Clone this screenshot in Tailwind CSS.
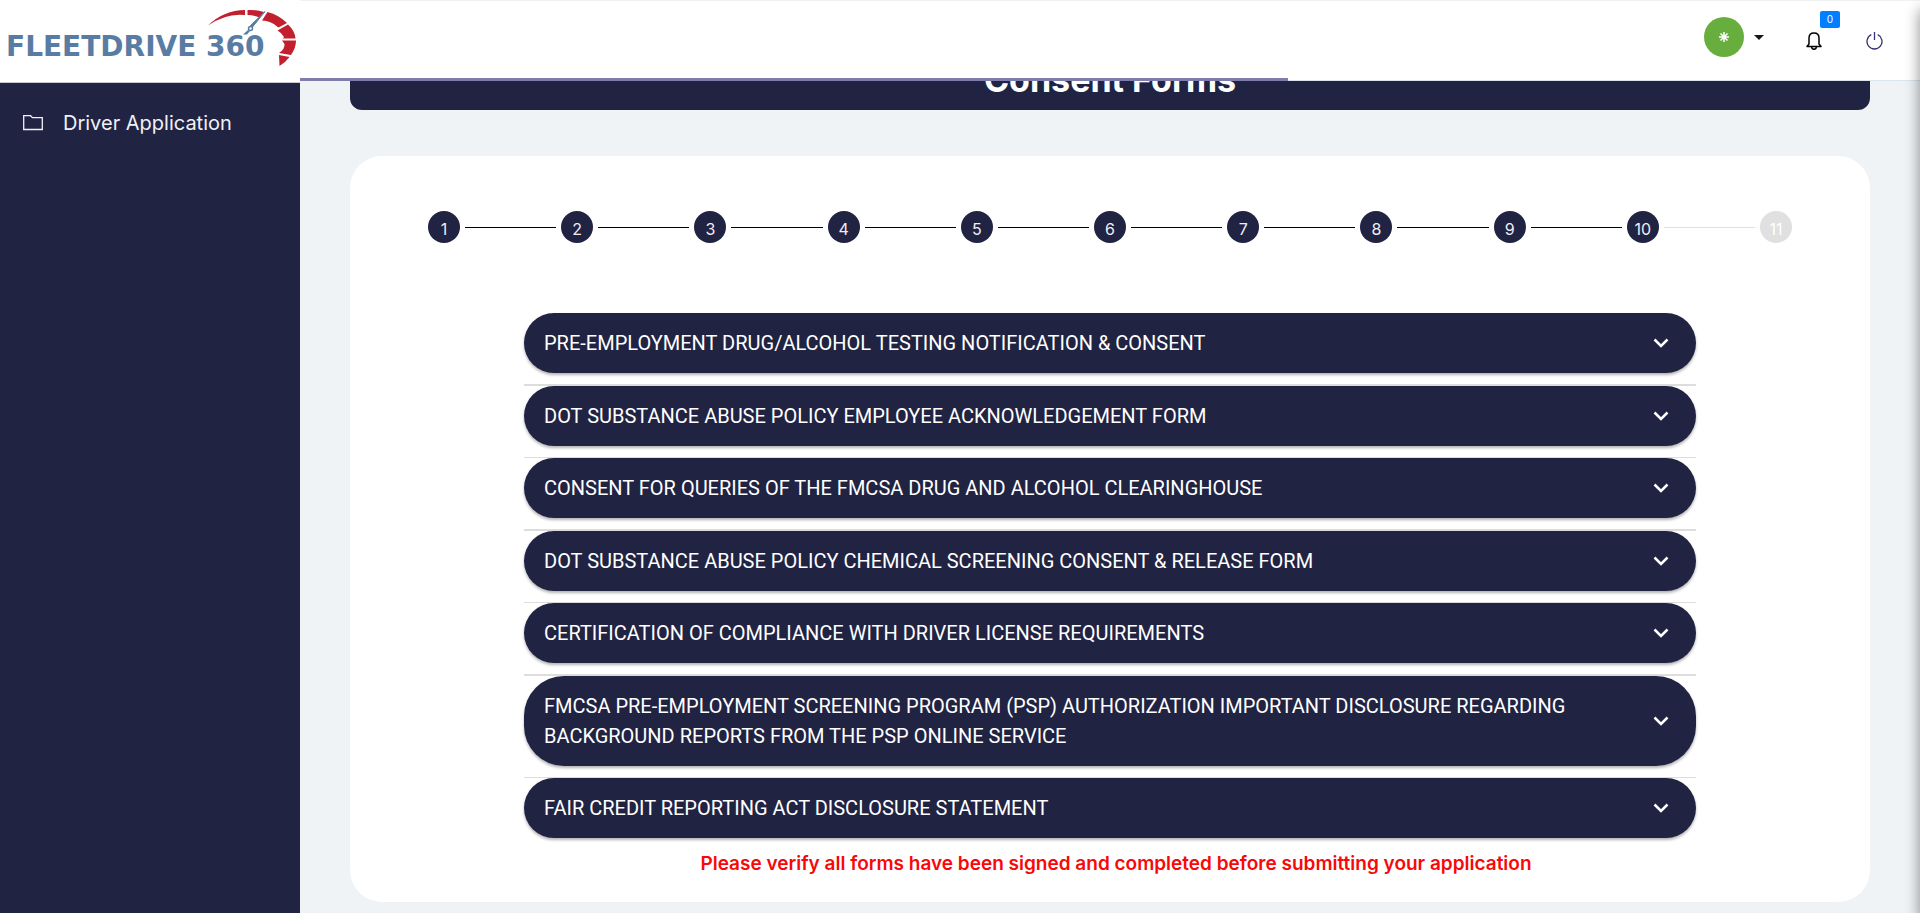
<!DOCTYPE html>
<html lang="en">
<head>
<meta charset="utf-8">
<title>FleetDrive 360 - Consent Forms</title>
<script src="https://cdn.jsdelivr.net/npm/@tailwindcss/browser@4"></script>
</head>
<body class="relative flex h-screen overflow-hidden bg-[#eff3f6] font-['Inter',sans-serif]">
<aside class="flex w-[300px] shrink-0 flex-col bg-[#212343]">
  <a href="#" aria-label="FleetDrive 360" class="relative flex h-[83px] items-center border-b border-[#c9c9cf] bg-white pt-3 pl-[6px] font-['DejaVu_Sans',sans-serif] text-[28px] font-bold whitespace-nowrap text-[#587ca3]">FLEETDRIVE 360
    <svg class="absolute top-[5px] left-[200px]" width="104" height="66" viewBox="0 0 104 66" fill="none">
      <path d="M8 20.500Q24 5 45 5V10Q26 8 8 20.500Z" fill="#c2202f"/>
      <path d="M47.500 5Q56 4.500 64 7L59.500 12.500Q53 10 47.500 10Z" fill="#c2202f"/>
      <path d="M67.500 7Q79 10 87 18L78.500 22.500L77 21.500Q71 16 62 15.500Z" fill="#c2202f"/>
      <path d="M88 19.500Q95 26 95.500 33.500H83L84 32Q82 28 77.500 25.500Z" fill="#c2202f"/>
      <path d="M96 35.500Q96 43 91 50L79 48Q85 44 84.500 39L82 35.500Z" fill="#c2202f"/>
      <path d="M89.500 52Q86 57 79.500 61L79 50Z" fill="#c2202f"/>
      <path d="M65 6.500L52.500 22L50.500 20.500Z" fill="#587ca3" stroke="#587ca3"/>
      <circle cx="50.500" cy="23.500" r="2" stroke="#587ca3" stroke-width="1.500"/>
      <path d="M48 25L43 29.500H47L50 26Z" fill="#587ca3"/>
    </svg>
  </a>
  <nav class="pt-6">
    <a href="#" class="flex items-center gap-5 px-[23px] text-xl leading-8 text-[#f1f1f6]">
      <svg width="20" height="16" viewBox="0 0 20 16" fill="none" stroke="currentColor" stroke-width="1.300"><path d="M.7 14.500V.7H7.500L9.500 2.700H19.300V14.500Z"/></svg>
      Driver Application
    </a>
  </nav>
</aside>
<div class="flex min-w-0 flex-1 flex-col">
  <header class="relative z-10 flex h-[81px] shrink-0 items-center justify-end border-t border-b border-t-[#eff3f6] border-b-[#dbe5ee] bg-white pr-[37px]">
    <button aria-label="Account" class="mr-[42px] flex items-center gap-[10px] pb-[7px]">
      <span class="flex size-10 items-center justify-center rounded-full bg-[#68ae3f] text-white">
        <svg width="10" height="10" viewBox="0 0 10 10" stroke="white" stroke-width="1.500"><path d="M5 0V10M0 5H10M1.500 1.500L8.500 8.500M8.500 1.500L1.500 8.500"/></svg>
      </span>
      <svg width="10" height="5" viewBox="0 0 10 5" fill="#14161f"><path d="M0 0H10L5 5Z"/></svg>
    </button>
    <button aria-label="Notifications" class="relative mr-11">
      <svg width="16" height="18" viewBox="0 0 16 18" fill="none" stroke="black" stroke-width="1.500"><path d="M3 12V6Q3 1 8 1T13 6V12L15 14.500H1Z" stroke-linejoin="round"/><path d="M5.500 15Q6 17.300 8 17.300T10.500 15"/></svg>
      <span class="absolute -top-[21px] left-[14px] flex h-[17px] w-5 items-center justify-center rounded-xs bg-[#0080ff] text-[10px] text-white">0</span>
    </button>
    <button aria-label="Log out">
      <svg width="17" height="18" viewBox="0 0 17 18" fill="none" stroke="#353377" stroke-width="1.300"><path d="M5.300 2.700A7.500 7.500 0 1 0 11.700 2.700M8.500 0V8"/></svg>
    </button>
    <div class="absolute -bottom-px left-0 h-[3px] w-[61%] bg-[#7f7dae]"></div>
  </header>
  <main class="flex-1 px-[50px]">
    <h1 class="-mt-8 flex h-[61px] items-end justify-center rounded-xl bg-[#212343] pb-3 text-[34px] leading-9 font-bold text-white">Consent Forms</h1>
    <section class="mt-[46px] rounded-[32px] bg-white px-[78px] pt-[55px] pb-6">
      <ol class="flex items-center gap-[5px] text-base text-[#eeeef4]">
        <li class="flex size-8 shrink-0 items-center justify-center rounded-full bg-[#212343] pt-1">1</li><li aria-hidden="true" class="h-px flex-1 bg-black"></li>
        <li class="flex size-8 shrink-0 items-center justify-center rounded-full bg-[#212343] pt-1">2</li><li aria-hidden="true" class="h-px flex-1 bg-black"></li>
        <li class="flex size-8 shrink-0 items-center justify-center rounded-full bg-[#212343] pt-1">3</li><li aria-hidden="true" class="h-px flex-1 bg-black"></li>
        <li class="flex size-8 shrink-0 items-center justify-center rounded-full bg-[#212343] pt-1">4</li><li aria-hidden="true" class="h-px flex-1 bg-black"></li>
        <li class="flex size-8 shrink-0 items-center justify-center rounded-full bg-[#212343] pt-1">5</li><li aria-hidden="true" class="h-px flex-1 bg-black"></li>
        <li class="flex size-8 shrink-0 items-center justify-center rounded-full bg-[#212343] pt-1">6</li><li aria-hidden="true" class="h-px flex-1 bg-black"></li>
        <li class="flex size-8 shrink-0 items-center justify-center rounded-full bg-[#212343] pt-1">7</li><li aria-hidden="true" class="h-px flex-1 bg-black"></li>
        <li class="flex size-8 shrink-0 items-center justify-center rounded-full bg-[#212343] pt-1">8</li><li aria-hidden="true" class="h-px flex-1 bg-black"></li>
        <li class="flex size-8 shrink-0 items-center justify-center rounded-full bg-[#212343] pt-1">9</li><li aria-hidden="true" class="h-px flex-1 bg-black"></li>
        <li class="flex size-8 shrink-0 items-center justify-center rounded-full bg-[#212343] pt-1">10</li><li aria-hidden="true" class="h-px flex-1 bg-[#e0e0e0]"></li>
        <li class="flex size-8 shrink-0 items-center justify-center rounded-full bg-[#e0e0e0] pt-1 text-white">11</li>
      </ol>
      <div class="mx-24 mt-[70px] flex flex-col font-['Roboto',sans-serif] text-xl leading-[30px] text-white">
        <button class="flex items-center justify-between rounded-[30px] bg-[#212343] py-[15px] pr-[27px] pl-5 text-left shadow-[0_2px_3px_rgba(0,0,0,0.3)]"><span>PRE-EMPLOYMENT DRUG/ALCOHOL TESTING NOTIFICATION &amp; CONSENT</span><svg class="shrink-0" width="16" height="10" viewBox="0 0 16 10" fill="none" stroke="white" stroke-width="2.500"><path d="M1.500 1.500L8 8L14.500 1.500"/></svg></button>
        <hr class="mt-[11px] border-t-2 border-[#dddddd]">
        <button class="flex items-center justify-between rounded-[30px] bg-[#212343] py-[15px] pr-[27px] pl-5 text-left shadow-[0_2px_3px_rgba(0,0,0,0.3)]"><span>DOT SUBSTANCE ABUSE POLICY EMPLOYEE ACKNOWLEDGEMENT FORM</span><svg class="shrink-0" width="16" height="10" viewBox="0 0 16 10" fill="none" stroke="white" stroke-width="2.500"><path d="M1.500 1.500L8 8L14.500 1.500"/></svg></button>
        <hr class="mt-[11px] border-t border-[#dddddd]">
        <button class="flex items-center justify-between rounded-[30px] bg-[#212343] py-[15px] pr-[27px] pl-5 text-left shadow-[0_2px_3px_rgba(0,0,0,0.3)]"><span>CONSENT FOR QUERIES OF THE FMCSA DRUG AND ALCOHOL CLEARINGHOUSE</span><svg class="shrink-0" width="16" height="10" viewBox="0 0 16 10" fill="none" stroke="white" stroke-width="2.500"><path d="M1.500 1.500L8 8L14.500 1.500"/></svg></button>
        <hr class="mt-[11px] border-t-2 border-[#dddddd]">
        <button class="flex items-center justify-between rounded-[30px] bg-[#212343] py-[15px] pr-[27px] pl-5 text-left shadow-[0_2px_3px_rgba(0,0,0,0.3)]"><span>DOT SUBSTANCE ABUSE POLICY CHEMICAL SCREENING CONSENT &amp; RELEASE FORM</span><svg class="shrink-0" width="16" height="10" viewBox="0 0 16 10" fill="none" stroke="white" stroke-width="2.500"><path d="M1.500 1.500L8 8L14.500 1.500"/></svg></button>
        <hr class="mt-[11px] border-t border-[#dddddd]">
        <button class="flex items-center justify-between rounded-[30px] bg-[#212343] py-[15px] pr-[27px] pl-5 text-left shadow-[0_2px_3px_rgba(0,0,0,0.3)]"><span>CERTIFICATION OF COMPLIANCE WITH DRIVER LICENSE REQUIREMENTS</span><svg class="shrink-0" width="16" height="10" viewBox="0 0 16 10" fill="none" stroke="white" stroke-width="2.500"><path d="M1.500 1.500L8 8L14.500 1.500"/></svg></button>
        <hr class="mt-[11px] border-t-2 border-[#dddddd]">
        <button class="flex items-center justify-between rounded-[40px] bg-[#212343] py-[15px] pr-[27px] pl-5 text-left shadow-[0_2px_3px_rgba(0,0,0,0.3)]"><span class="pr-12">FMCSA PRE-EMPLOYMENT SCREENING PROGRAM (PSP) AUTHORIZATION IMPORTANT DISCLOSURE REGARDING BACKGROUND REPORTS FROM THE PSP ONLINE SERVICE</span><svg class="shrink-0" width="16" height="10" viewBox="0 0 16 10" fill="none" stroke="white" stroke-width="2.500"><path d="M1.500 1.500L8 8L14.500 1.500"/></svg></button>
        <hr class="mt-[11px] border-t border-[#dddddd]">
        <button class="flex items-center justify-between rounded-[30px] bg-[#212343] py-[15px] pr-[27px] pl-5 text-left shadow-[0_2px_3px_rgba(0,0,0,0.3)]"><span>FAIR CREDIT REPORTING ACT DISCLOSURE STATEMENT</span><svg class="shrink-0" width="16" height="10" viewBox="0 0 16 10" fill="none" stroke="white" stroke-width="2.500"><path d="M1.500 1.500L8 8L14.500 1.500"/></svg></button>
      </div>
      <p class="mt-3 pl-3 text-center text-[19px] leading-7 font-semibold text-[#f80808]">Please verify all forms have been signed and completed before submitting your application</p>
    </section>
  </main>
</div>
<div class="absolute inset-y-0 left-full z-20 w-10 shadow-[0_10px_15px_rgba(0,0,0,0.45)]"></div>
</body>
</html>
